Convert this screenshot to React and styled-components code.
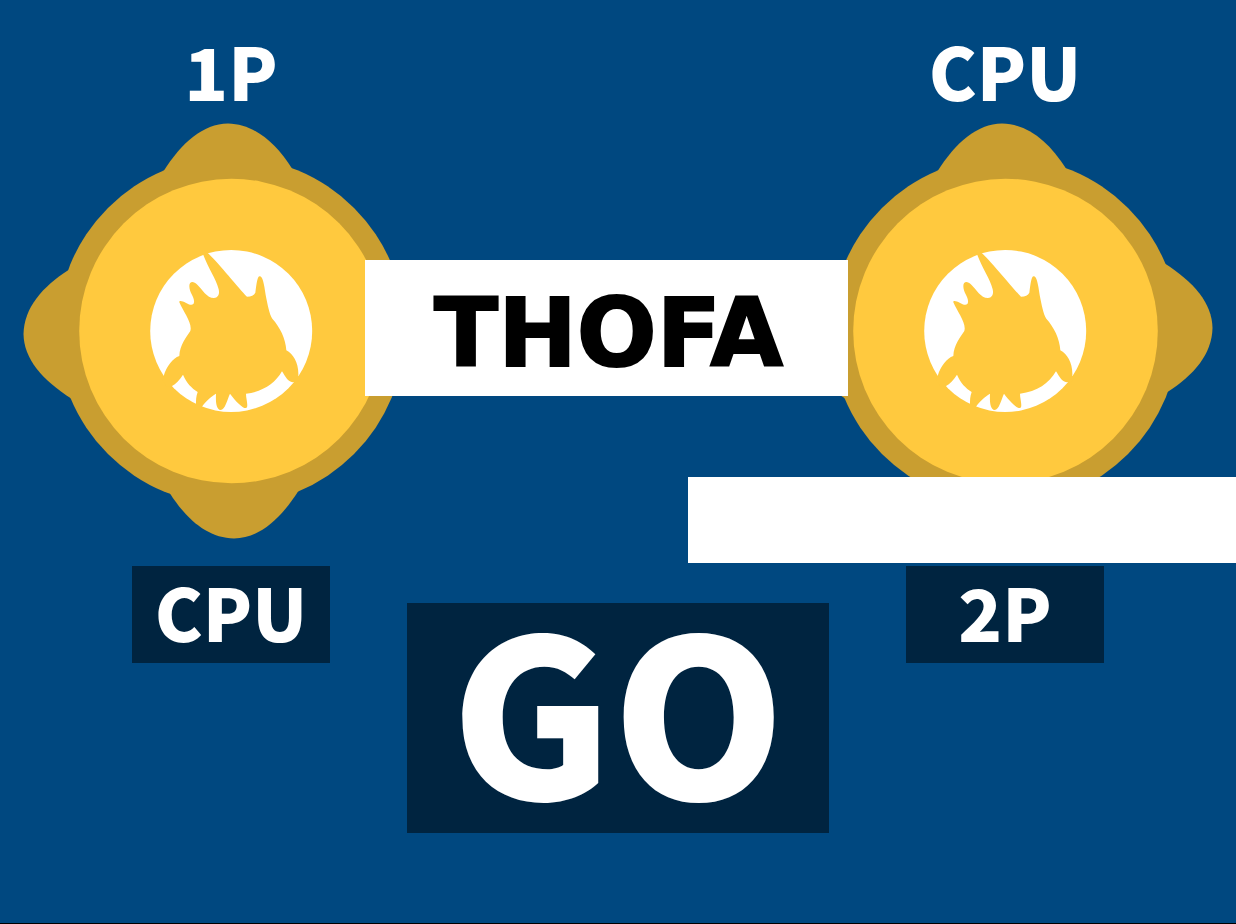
import React from "react";
import styled, { createGlobalStyle } from "styled-components";

const GlobalStyle = createGlobalStyle`
  *, *::before, *::after { box-sizing: border-box; }
  body {
    margin: 0;
    background: #004880;
    font-family: "Noto Sans CJK JP", sans-serif;
    font-weight: 900;
    color: #fff;
  }
`;

const Screen = styled.main`
  min-height: 100vh;
  overflow: hidden;
  padding-top: 22px;
  border-bottom: 1px solid #000;
  background: #004880;
`;

const Players = styled.section`
  position: relative;
  display: flex;
  justify-content: space-between;
  padding: 0 22px;
`;

const Player = styled.div`
  display: flex;
  flex-direction: column;
  align-items: center;
  gap: 4px;
`;

const PlayerName = styled.h2`
  margin: 0;
  font-size: 72px;
  line-height: 96px;
  font-weight: 900;
`;

const Coin = styled.svg`
  display: block;
  width: 418px;
  height: 418px;
`;

const TitleBanner = styled.h1`
  position: absolute;
  top: 238px;
  left: 365px;
  right: 388px;
  height: 136px;
  margin: 0;
  padding: 12px 0 0 4px;
  background: #fff;
  color: #000;
  font-family: "DejaVu Sans", sans-serif;
  font-size: 94px;
  line-height: 124px;
  font-weight: 700;
  -webkit-text-stroke: 2px #000;
  text-align: center;
`;

const BlankBanner = styled.div`
  position: absolute;
  top: 455px;
  left: calc(50% + 70px);
  right: 0;
  height: 86px;
  background: #fff;
`;

const Controls = styled.section`
  display: flex;
  justify-content: space-between;
  align-items: flex-start;
  padding: 26px 132px 0;
`;

const DarkButton = styled.button`
  border: 0;
  background: #002440;
  color: #fff;
  font: inherit;
  cursor: pointer;
`;

const SeatButton = styled(DarkButton)`
  width: 198px;
  height: 97px;
  padding: 0 0 8px;
  font-size: 72px;
  line-height: 89px;
`;

const GoButton = styled(DarkButton)`
  width: 422px;
  height: 230px;
  margin-top: 37px;
  padding: 0 0 28px;
  font-size: 220px;
  line-height: 202px;
`;

const LOBE =
  "M163 172 C182 142 203 124 228 123.5 C254 124 275 142 292 168.5 L292 200 L163 200 Z";

const CREATURE =
  "M190 45 L186 30 L196 32 L204 40 C235 68 295 144 321 170 Q340 170 346 158 " +
  "C350 130 352 109 359 109 C368 109 372 130 377 165 C383 195 388 222 397 236 " +
  "C420 262 437 295 439 331 C460 342 477 370 475 408 L482 412 L472 428 L462 426 " +
  "C446 430 436 410 426 394 C405 430 370 455 318 461 C318 475 324 492 321 502 " +
  "C315 512 290 488 270 461 C262 478 255 510 242 510 C228 508 227 485 228 461 " +
  "C212 470 195 487 186 500 L180 510 L164 500 L168 491 C168 480 168 470 173 456 " +
  "C155 444 140 430 129 404 C120 418 108 432 95 439 L80 440 L66 416 L71 408 " +
  "C80 378 98 355 118 348 C119 315 140 290 151 273 C158 250 130 215 118 187 " +
  "C116 180 128 183 137 188 C148 195 162 198 162 186 C164 172 148 158 148 138 " +
  "C148 124 160 122 172 134 C187 148 200 174 222 174 C236 174 239 160 236 148 " +
  "C228 116 205 85 190 45 Z";

function PlayerCoin() {
  return (
    <Coin viewBox="22 122 418 418" aria-hidden="true">
      <g fill="#c99e30">
        <circle cx="231" cy="331" r="174" />
        {[0, 90, 180, 270].map((angle) => (
          <path key={angle} d={LOBE} transform={`rotate(${angle} 231 331)`} />
        ))}
      </g>
      <circle cx="231.5" cy="331" r="152.3" fill="#ffc93e" />
      <circle cx="231.2" cy="331" r="81" fill="#fff" />
      <path d={CREATURE} fill="#ffc93e" transform="translate(140 240) scale(0.33333)" />
    </Coin>
  );
}

export default function App() {
  return (
    <>
      <GlobalStyle />
      <Screen>
        <Players>
          {["1P", "CPU"].map((name) => (
            <Player key={name}>
              <PlayerName>{name}</PlayerName>
              <PlayerCoin />
            </Player>
          ))}
          <TitleBanner>THOFA</TitleBanner>
          <BlankBanner />
        </Players>
        <Controls>
          <SeatButton type="button">CPU</SeatButton>
          <GoButton type="button">GO</GoButton>
          <SeatButton type="button">2P</SeatButton>
        </Controls>
      </Screen>
    </>
  );
}
